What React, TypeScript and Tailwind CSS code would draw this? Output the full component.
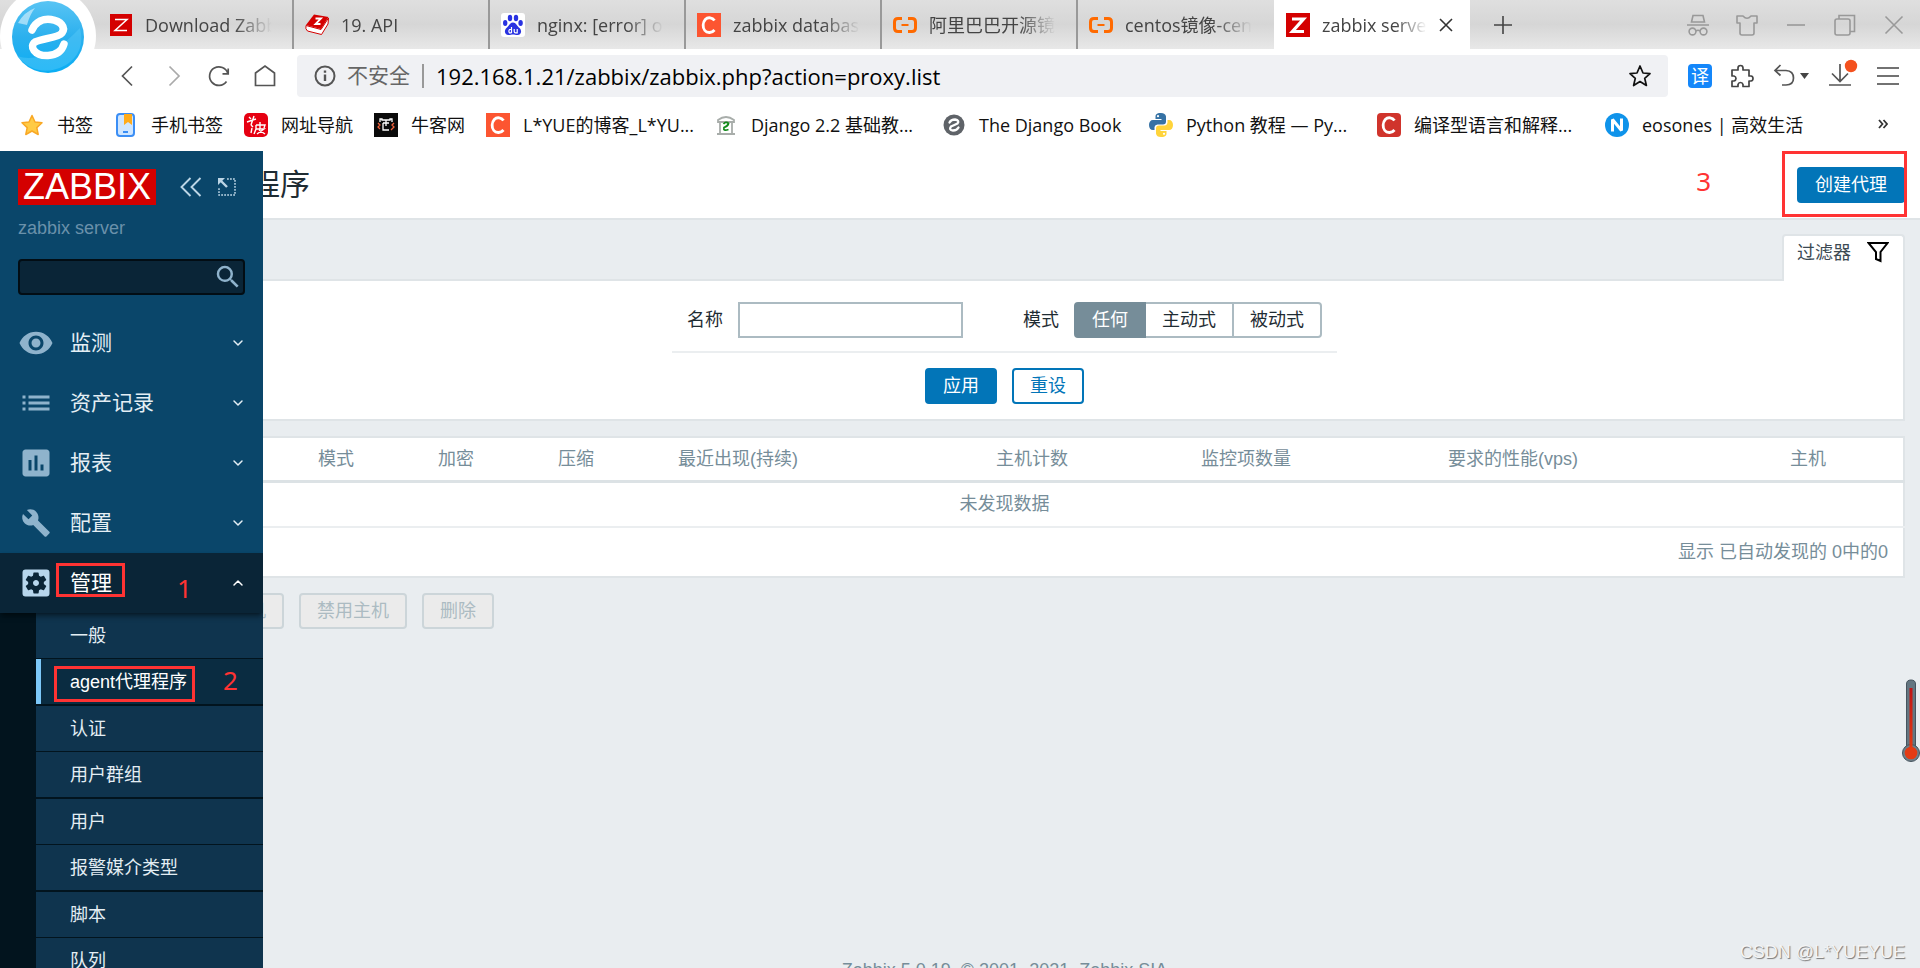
import React, { useState } from 'react';
import { ChevronDown, ChevronUp } from 'lucide-react';
import { MdBuild, MdInsertChart, MdList, MdSearch, MdSettingsApplications, MdVisibility } from 'react-icons/md';

/* ---------- small favicons ---------- */

const ZabbixThin = () => (
  <svg viewBox="0 0 24 24" className="size-6">
    <rect x="1" y="1" width="22" height="22" fill="#d40000" />
    <path d="M6 6.500H18L6 17.500H18" fill="none" stroke="#fff" strokeWidth="1.500" />
  </svg>
);

const ZabbixBold = () => (
  <svg viewBox="0 0 24 24" className="size-6">
    <rect width="24" height="24" fill="#d40000" />
    <path d="M6 6H17.500L6.500 18.500H18" fill="none" stroke="#fff" strokeWidth="3.200" />
  </svg>
);

const ApiBook = () => (
  <svg viewBox="0 0 24 24" className="size-6">
    <path d="M9 1.500L23.500 4L16 16L1 12Z" fill="#d40000" />
    <path d="M1 12.500L16 16.500L23.500 5L23 11L16.500 21.500L2.500 18Q0 16 1 12.500Z" fill="#fff" stroke="#d40000" strokeWidth="1" />
    <path d="M10.500 5.500H16L10.500 11H15.500" fill="none" stroke="#fff" strokeWidth="1.800" />
  </svg>
);

const Baidu = () => (
  <svg viewBox="0 0 24 24" className="size-6">
    <rect width="24" height="24" rx="3" fill="#fff" />
    <g fill="#2932e1">
      <ellipse cx="9" cy="5" rx="2.200" ry="3.200" />
      <ellipse cx="15" cy="5" rx="2.200" ry="3.200" />
      <ellipse cx="4.200" cy="10" rx="2.200" ry="2.900" />
      <ellipse cx="19.600" cy="10" rx="2.200" ry="2.900" />
      <path d="M12 9.500C15 9.500 16 13 18.500 15C21.500 18 20 22 16.500 22C14.500 22 13.500 21.500 12 21.500S9.500 22 7.500 22C4 22 2.500 18 5.500 15C8 13 9 9.500 12 9.500Z" />
    </g>
    <path d="M10.500 14V20M10.500 16.500H8.500Q7.300 18.200 8.500 19.800H10.500M13.200 16V18.500Q13.300 19.800 14.500 19.800H16.200V16" fill="none" stroke="#fff" strokeWidth="1.200" />
  </svg>
);

const LetterC = ({ color, round }: { color: string; round?: boolean }) => (
  <svg viewBox="0 0 24 24" className="size-6 shrink-0">
    <rect width="24" height="24" rx={round ? 4 : 0} fill={color} />
    <path d="M17.500 7.500C15.500 4.500 11 3.600 8.300 6.500C5.600 9.500 5.400 14.500 7.800 17.500C10.300 20.500 15 20 17.500 17" fill="none" stroke="#fff" strokeWidth="2.800" />
  </svg>
);

const Aliyun = () => (
  <svg viewBox="0 0 24 24" className="size-6" fill="none" stroke="#ff6a00">
    <path d="M9 5.500H5Q1.500 5.500 1.500 9V15Q1.500 18.500 5 18.500H9M15 5.500H19Q22.500 5.500 22.500 9V15Q22.500 18.500 19 18.500H15" strokeWidth="3" />
    <path d="M8.500 12H15.500" strokeWidth="2" />
  </svg>
);

const Star = () => (
  <svg viewBox="0 0 24 24" className="size-6">
    <path d="M12 2.500L15 9L22 9.800L16.800 14.600L18.200 21.500L12 18L5.800 21.500L7.200 14.600L2 9.800L9 9Z" fill="#ffcb45" stroke="#f9a825" strokeWidth="1.500" strokeLinejoin="round" />
  </svg>
);

const Phone = () => (
  <svg viewBox="0 0 24 24" className="size-6">
    <rect x="3" y="1" width="17" height="22" rx="3" fill="#cfe6ff" stroke="#3b8ef5" strokeWidth="2" />
    <path d="M10 1H18V12L14 9L10 12Z" fill="#ffab1a" />
    <path d="M9 19H14" stroke="#3b8ef5" strokeWidth="2" />
  </svg>
);

const NavSite = () => (
  <svg viewBox="0 0 24 24" className="size-6">
    <rect width="24" height="24" rx="5" fill="#e60012" />
    <path d="M5 4L7 6M10 3L7 12M3 9L12 6M8 15L7 20M12 12V16L10 21M12 12H21L20 15M16 9V16M12 16H20L13 21M15 17L21 21M7 12L9 14" fill="none" stroke="#fff" strokeWidth="1.400" />
  </svg>
);

const Nowcoder = () => (
  <svg viewBox="0 0 24 24" className="size-6">
    <rect width="24" height="24" fill="#0a0a0a" />
    <path d="M6 9V6H8V7H16V6H18V9M12 7V13M9 10H15M9 10V17H15" fill="none" stroke="#fff" strokeWidth="1.300" />
    <path d="M4 10L6 12L4 14L6 16M20 10L18 12L20 14L17 17" fill="none" stroke="#f0603a" strokeWidth="1.300" />
  </svg>
);

const DjangoTemple = () => (
  <svg viewBox="0 0 24 24" className="size-6">
    <path d="M4 7Q12 1 20 7V9H4ZM6 9V20M18 9V20M3 21H21" fill="none" stroke="#a8adaa" strokeWidth="1.800" />
    <path d="M9.500 11Q12 8 14.500 10.500Q14 13 10 14.500Q9 18.500 14.500 16.500" fill="none" stroke="#138a1b" strokeWidth="1.800" />
  </svg>
);

const GrayE = () => (
  <svg viewBox="0 0 24 24" className="size-6">
    <circle cx="12" cy="12" r="10.500" fill="#5f6368" />
    <path d="M7.500 9.500Q9 6.500 13 6.500Q18 7.500 15.500 10.500Q12.500 12 9 13.500Q6.500 17 11 17.500Q15 17.500 16.500 14.500" fill="none" stroke="#fff" strokeWidth="2.300" strokeLinecap="round" />
  </svg>
);

const Python = () => (
  <svg viewBox="0 0 24 24" className="size-6">
    <path d="M12 0C7 0 6.500 2 6.500 3.500V6H12.500V7H4C1.500 7 0 9 0 12S1.500 17 4 17H5.500V14Q6 11.500 8.500 11.500H14Q17 11.500 17 8.500V3.500Q16.500 0 12 0Z" fill="#3672a5" />
    <path d="M12 24C17 24 17.500 22 17.500 20.500V18H11.500V17H20C22.500 17 24 15 24 12S22.500 7 20 7H18.500V9.500Q18 12.500 15.500 12.500H10Q7 12.500 7 15.500V20.500Q7.500 24 12 24Z" fill="#ffd43b" />
    <circle cx="9" cy="3.200" r="1.100" fill="#fff" />
    <circle cx="15" cy="20.800" r="1.100" fill="#fff" />
  </svg>
);

const LetterN = () => (
  <svg viewBox="0 0 24 24" className="size-6">
    <circle cx="12" cy="12" r="12" fill="#0f93ea" />
    <path d="M7.500 18.500V6.500L16.500 17.500V5.500" fill="none" stroke="#fff" strokeWidth="3" strokeLinejoin="bevel" />
  </svg>
);

const BrowserLogo = () => (
  <svg viewBox="0 0 98 98" className="h-[98px] w-[98px]">
    <defs>
      <linearGradient id="logoBlue" x1="0" y1="0" x2="0" y2="1">
        <stop offset="0" stopColor="#58c4f4" />
        <stop offset="0.500" stopColor="#2bb0ee" />
        <stop offset="1" stopColor="#0aaef4" />
      </linearGradient>
    </defs>
    <circle cx="48" cy="36" r="48" fill="#fff" />
    <circle cx="48" cy="37" r="36" fill="url(#logoBlue)" />
    <path d="M18 23Q24 12 35 8Q30 14 27 25Z" fill="#fff" opacity="0.500" />
    <path d="M17 56Q44 66 80 28Q86 52 66 65Q38 80 17 56Z" fill="#5fcdfa" opacity="0.400" />
    <path d="M32 30C36 21 44 18.500 51 19.500C61 21 66 27 62 33C58 38 44 38 35 42C29 46 34 56 48 55.500C56 55 62 51 64 44" fill="none" stroke="#fff" strokeWidth="7.500" strokeLinecap="round" />
  </svg>
);

/* ---------- data ---------- */

const tabs = [
  { title: 'Download Zabbix', icon: <ZabbixThin /> },
  { title: '19. API', icon: <ApiBook /> },
  { title: 'nginx: [error] open()', icon: <Baidu /> },
  { title: 'zabbix database', icon: <LetterC color="#fc5531" /> },
  { title: '阿里巴巴开源镜像站', icon: <Aliyun /> },
  { title: 'centos镜像-centos', icon: <Aliyun /> }
];

const bookmarks = [
  { title: '书签', icon: <Star />, width: '' },
  { title: '手机书签', icon: <Phone />, width: '' },
  { title: '网址导航', icon: <NavSite />, width: '' },
  { title: '牛客网', icon: <Nowcoder />, width: '' },
  { title: 'L*YUE的博客_L*YU...', icon: <LetterC color="#fc5531" />, width: 'w-[207px]' },
  { title: 'Django 2.2 基础教...', icon: <DjangoTemple />, width: 'w-[207px]' },
  { title: 'The Django Book', icon: <GrayE />, width: 'w-[186px]' },
  { title: 'Python 教程 — Py...', icon: <Python />, width: 'w-[207px]' },
  { title: '编译型语言和解释...', icon: <LetterC color="#d0342c" round />, width: 'w-[207px]' },
  { title: 'eosones | 高效生活', icon: <LetterN />, width: '' }
];

const menu = [
  { label: '监测', icon: <MdVisibility className="size-9" /> },
  { label: '资产记录', icon: <MdList className="size-9" /> },
  { label: '报表', icon: <MdInsertChart className="size-9" /> },
  { label: '配置', icon: <MdBuild className="size-[30px]" /> }
];

const submenu = ['一般', 'agent代理程序', '认证', '用户群组', '用户', '报警媒介类型', '脚本', '队列'];

const modes = ['任何', '主动式', '被动式'];

/* ---------- browser chrome ---------- */

const IconButton = ({ label, children }: { label: string; children: React.ReactNode }) => (
  <button type="button" aria-label={label} className="flex size-6 items-center justify-center">
    {children}
  </button>
);

const TabBar = () => (
  <div className="flex h-[49px] bg-linear-to-b from-[#dfdfdf] via-[#d6d6d6] to-[#e8e8e8] pl-[98px] text-lg text-[#444]">
    {tabs.map((tab) => (
      <button key={tab.title} type="button" className="flex w-[196px] items-center gap-3 border-r-2 border-[#999] pr-5 pl-[11px] nth-6:border-transparent">
        <span className="shrink-0">{tab.icon}</span>
        <span className="flex-1 overflow-hidden text-left whitespace-nowrap mask-r-from-70% mask-r-to-100%">{tab.title}</span>
      </button>
    ))}
    <div className="flex w-[196px] items-center gap-3 bg-white pr-[17px] pl-3">
      <ZabbixBold />
      <span className="flex-1 overflow-hidden whitespace-nowrap mask-r-from-70% mask-r-to-100%">zabbix server</span>
      <button type="button" aria-label="关闭标签">
        <svg viewBox="0 0 14 14" className="size-[14px]" stroke="#333" strokeWidth="1.600">
          <path d="M1 1L13 13M13 1L1 13" />
        </svg>
      </button>
    </div>
    <button type="button" aria-label="新标签" className="ml-6">
      <svg viewBox="0 0 18 18" className="size-[18px]" stroke="#444" strokeWidth="1.600">
        <path d="M9 0V18M0 9H18" />
      </svg>
    </button>
    <div className="ml-auto flex items-center gap-[25px] pr-[14px]">
      <IconButton label="无痕">
        <svg viewBox="0 0 24 24" className="size-6" fill="none" stroke="#999" strokeWidth="1.600">
          <path d="M5.500 9L7 2.500H17L18.500 9ZM1 12H23M10 18Q12 16.500 14 18" />
          <circle cx="6.500" cy="18.500" r="3.400" />
          <circle cx="17.500" cy="18.500" r="3.400" />
        </svg>
      </IconButton>
      <IconButton label="皮肤">
        <svg viewBox="0 0 24 24" className="size-6" fill="none" stroke="#999" strokeWidth="1.600" strokeLinejoin="round">
          <path d="M2 3H8Q12 7.500 16 3H22V10H19V20Q19 22 17 22H7Q5 22 5 20V10H2Z" />
        </svg>
      </IconButton>
      <IconButton label="最小化">
        <svg viewBox="0 0 24 24" className="size-6" stroke="#999" strokeWidth="1.600">
          <path d="M3 12H21" />
        </svg>
      </IconButton>
      <IconButton label="还原">
        <svg viewBox="0 0 24 24" className="size-6" fill="none" stroke="#999" strokeWidth="1.600">
          <rect x="2" y="6" width="15" height="16" rx="2" />
          <path d="M6 6V2.500H21.500V18.500H17" />
        </svg>
      </IconButton>
      <IconButton label="关闭">
        <svg viewBox="0 0 24 24" className="size-6" stroke="#999" strokeWidth="1.600">
          <path d="M3.500 3.500L20.500 20.500M20.500 3.500L3.500 20.500" />
        </svg>
      </IconButton>
    </div>
  </div>
);

const AddressBar = () => (
  <div className="flex h-[54px] items-center bg-white pr-5 pl-[115px]">
    <div className="flex items-center gap-[22px] pr-5">
      <IconButton label="后退">
        <svg viewBox="0 0 24 24" className="size-6" fill="none" stroke="#555" strokeWidth="1.700">
          <path d="M17 2.500L7.500 12L17 21.500" />
        </svg>
      </IconButton>
      <IconButton label="前进">
        <svg viewBox="0 0 24 24" className="size-6" fill="none" stroke="#aaa" strokeWidth="1.700">
          <path d="M8.500 2.500L18 12L8.500 21.500" />
        </svg>
      </IconButton>
      <IconButton label="刷新">
        <svg viewBox="0 0 24 24" className="size-6" fill="none" stroke="#555" strokeWidth="1.700">
          <path d="M19.500 17.500A9.300 9.300 0 1 1 20.800 9.500M15.500 9.800H21.200V4.500" />
        </svg>
      </IconButton>
      <IconButton label="主页">
        <svg viewBox="0 0 24 24" className="size-6" fill="none" stroke="#555" strokeWidth="1.700">
          <path d="M2.500 21.500V9L12 2L21.500 9V21.500Z" />
        </svg>
      </IconButton>
    </div>
    <div className="flex h-[42px] flex-1 items-center rounded-sm bg-[#f0f1f4] px-4">
      <svg viewBox="0 0 24 24" className="size-6" fill="none" stroke="#555" strokeWidth="2">
        <circle cx="12" cy="12" r="9.500" />
        <path d="M12 10.500V17M12 6.500V8.800" strokeWidth="2.400" />
      </svg>
      <span className="ml-[10px] text-[21px] text-[#666]">不安全</span>
      <span className="mx-3 h-6 w-[2px] bg-[#999]" />
      <input aria-label="地址" defaultValue="192.168.1.21/zabbix/zabbix.php?action=proxy.list" className="h-full min-w-0 flex-1 text-[22px] text-black outline-none" />
      <IconButton label="收藏">
        <svg viewBox="0 0 24 24" className="size-6" fill="none" stroke="#111" strokeWidth="1.700" strokeLinejoin="round">
          <path d="M12 2L15 9L22 9.600L16.700 14.300L18.400 21.500L12 17.600L5.600 21.500L7.300 14.300L2 9.600L9 9Z" />
        </svg>
      </IconButton>
    </div>
    <div className="flex items-center gap-[18px] pl-5">
      <button type="button" className="flex size-6 items-center justify-center rounded-sm bg-[#1487fa] text-lg leading-6 text-white">译</button>
      <IconButton label="扩展">
        <svg viewBox="0 0 24 24" className="size-6" fill="none" stroke="#444" strokeWidth="1.700" strokeLinejoin="round">
          <path d="M2 6H8V4Q8 1.500 10.500 1.500T13 4V6H19V12H21Q23 12.300 23 14.500T21 17H19V22.500H13V20.500Q12.500 18.500 10.500 18.500T8 20.500V22.500H2V17H4Q6 16.500 6 14.500T4 12H2Z" />
        </svg>
      </IconButton>
      <button type="button" aria-label="撤销" className="flex items-center">
        <svg viewBox="0 0 38 24" className="h-6 w-[38px]" fill="none" stroke="#555" strokeWidth="1.700">
          <path d="M8.500 1L3 6.500L8.500 11.500M3 6.500H14Q21.500 7 21.500 14T14 21H10" />
          <path d="M28 9H37L32.500 15Z" fill="#444" stroke="none" />
        </svg>
      </button>
      <button type="button" aria-label="下载">
        <svg viewBox="0 0 30 30" className="-mt-1 h-[30px] w-[30px]" fill="none" stroke="#555" strokeWidth="1.700">
          <path d="M12 5V22M4 14.500L12 22.500L20 14.500M1 26H23" />
          <circle cx="23" cy="7" r="6.200" fill="#f4511e" stroke="none" />
        </svg>
      </button>
      <IconButton label="菜单">
        <svg viewBox="0 0 24 24" className="size-6" stroke="#444" strokeWidth="1.700">
          <path d="M1 4H23M1 12H23M1 20H23" />
        </svg>
      </IconButton>
    </div>
  </div>
);

const BookmarkBar = () => (
  <nav className="flex h-12 items-center gap-[21px] bg-white pr-8 pb-1 pl-5 text-lg text-[#111]">
    {bookmarks.map((item) => (
      <a key={item.title} href="#" className={`flex shrink-0 items-center gap-[13px] whitespace-nowrap ${item.width}`}>
        <span className="shrink-0">{item.icon}</span>
        {item.title}
      </a>
    ))}
    <button type="button" aria-label="更多书签" className="ml-auto">
      <svg viewBox="0 0 10 12" className="h-3 w-[10px]" fill="none" stroke="#333" strokeWidth="1.800">
        <path d="M1 1L4.500 5L1 9M5.500 1L9 5L5.500 9" />
      </svg>
    </button>
  </nav>
);

/* ---------- zabbix ---------- */

const Sidebar = () => (
  <aside className="absolute inset-y-0 left-0 z-10 flex w-[263px] flex-col overflow-hidden bg-[#0a466a]">
    <div className="flex shrink-0 items-center px-[18px] pt-[18px]">
      <a href="#" className="flex h-9 items-center bg-[#d40000] px-[5px] text-4xl leading-9 text-white">ZABBIX</a>
      <button type="button" aria-label="收起侧边栏" className="ml-6">
        <svg viewBox="0 0 22 20" className="h-5 w-[22px]" fill="none" stroke="#bcd5e5" strokeWidth="1.900">
          <path d="M10.500 1L1.500 10L10.500 19M20.500 1L11.500 10L20.500 19" />
        </svg>
      </button>
      <button type="button" aria-label="隐藏侧边栏" className="ml-4">
        <svg viewBox="0 0 18 18" className="size-[18px]" fill="none" stroke="#bcd5e5" strokeWidth="1.500">
          <path d="M9 1H17V17H1V9" strokeDasharray="1.800 1.200" />
          <path d="M2 2L9 9" strokeWidth="2.400" />
          <path d="M0 0H7L0 7Z" fill="#bcd5e5" stroke="none" />
        </svg>
      </button>
    </div>
    <div className="shrink-0 px-[18px] pt-[9px] text-lg text-[#6a91aa]">zabbix server</div>
    <form className="mx-[18px] mt-[17px] mb-[18px] flex h-9 shrink-0 items-center rounded-sm border-2 border-[#020d14] bg-[#0a2537]" onSubmit={(e) => e.preventDefault()}>
      <input aria-label="搜索" className="min-w-0 flex-1 px-2 text-lg text-white outline-none" />
      <button type="submit" aria-label="搜索" className="text-[#8fb3cc]">
        <MdSearch className="size-[30px]" />
      </button>
    </form>
    <nav className="shrink-0 text-[21px] text-[#e4eef4]">
      {menu.map((item) => (
        <a key={item.label} href="#" className="flex h-[60px] items-center gap-4 pr-[17px] pl-[18px]">
          <span className="flex w-9 justify-center text-[#8fb3cc]">{item.icon}</span>
          <span className="flex-1">{item.label}</span>
          <ChevronDown className="size-4" strokeWidth={2.2} />
        </a>
      ))}
      <a href="#" className="relative flex h-[60px] items-center gap-4 bg-[#0a2537] pr-[17px] pl-[18px] text-white shadow-md shadow-black/40">
        <span className="flex w-9 justify-center text-[#b7d6ec]">
          <MdSettingsApplications className="size-9" />
        </span>
        <span className="flex-1">管理</span>
        <ChevronUp className="size-4" strokeWidth={2.2} />
      </a>
      <ul className="bg-[#02141e] pl-9 text-lg">
        {submenu.map((label) => (
          <li key={label} className="border-b border-[#02141e] even:border-b-2">
            <a
              href="#"
              className={`flex h-[45px] items-center ${
                label === 'agent代理程序' ? 'border-l-[5px] border-[#7cc8f9] bg-[#0a2c41] pl-[29px] text-white' : 'bg-[#0f344e] pl-[34px]'
              }`}
            >
              {label}
            </a>
          </li>
        ))}
      </ul>
    </nav>
  </aside>
);

const Filter = () => {
  const [mode, setMode] = useState('任何');

  return (
    <section>
      <div className="flex justify-end">
        <button type="button" className="relative -mb-[2px] flex h-[47px] items-start gap-4 rounded-t-sm border-2 border-b-0 border-[#dfe4e7] bg-white pt-[3px] pr-[14px] pl-[13px] text-lg text-[#3c4a53]">
          过滤器
          <svg viewBox="0 0 22 22" className="mt-[2px] size-[22px]" fill="none" stroke="#000" strokeWidth="2">
            <path d="M1.500 2H20.500L13.500 11V20L9 18V11Z" />
          </svg>
        </button>
      </div>
      <form className="flex flex-col items-center border-2 border-[#dfe4e7] bg-white pt-[21px] pb-[15px]" onSubmit={(e) => e.preventDefault()}>
        <div className="flex items-center border-b-2 border-[#ebeef0] px-[15px] pb-[13px]">
          <label htmlFor="filter-name" className="mr-[15px]">名称</label>
          <input id="filter-name" className="mr-[60px] h-9 w-[225px] border-2 border-[#acbbc2] px-1 outline-none" />
          <span className="mr-[15px]">模式</span>
          <div className="flex h-9">
            {modes.map((item) => (
              <label
                key={item}
                className="flex items-center border-2 border-l-0 border-[#acbbc2] px-4 first:rounded-l-sm first:border-l-2 last:rounded-r-sm has-checked:border-[#768d99] has-checked:bg-[#768d99] has-checked:text-white"
              >
                <input type="radio" name="mode" className="sr-only" checked={mode === item} onChange={() => setMode(item)} />
                {item}
              </label>
            ))}
          </div>
        </div>
        <div className="flex gap-[15px] pt-[15px]">
          <button type="submit" className="h-9 rounded-sm border-2 border-[#0275b8] bg-[#0275b8] px-4 text-white">应用</button>
          <button type="reset" className="h-9 rounded-sm border-2 border-[#0275b8] bg-white px-4 text-[#0275b8]">重设</button>
        </div>
      </form>
    </section>
  );
};

const ProxyTable = () => (
  <table className="mt-[15px] w-full border-collapse border-2 border-[#dfe4e7] bg-white text-[#768d99]">
    <thead>
      <tr className="h-11 border-b-[3px] border-[#dce2e5] text-left">
        <th className="w-[206px] pl-12 font-normal">名称</th>
        <th className="w-[120px] pl-[7px] font-normal">模式</th>
        <th className="w-[120px] pl-[7px] font-normal">加密</th>
        <th className="w-[120px] pl-[7px] font-normal">压缩</th>
        <th className="w-[240px] pl-[7px] font-normal">最近出现(持续)</th>
        <th className="w-[164px] pr-[7px] text-right font-normal">主机计数</th>
        <th className="w-[223px] pr-[7px] text-right font-normal">监控项数量</th>
        <th className="w-[287px] pr-[7px] text-right font-normal">要求的性能(vps)</th>
        <th className="pl-[205px] font-normal">主机</th>
      </tr>
    </thead>
    <tbody>
      <tr className="h-[46px] border-b-2 border-[#ebeef0]">
        <td colSpan={9} className="text-center">未发现数据</td>
      </tr>
      <tr className="h-[50px]">
        <td colSpan={9} className="pr-[15px] text-right">显示 已自动发现的 0中的0</td>
      </tr>
    </tbody>
  </table>
);

const Main = () => (
  <main className="flex h-full flex-col overflow-hidden bg-[#e9edf0] pl-[104px] text-lg text-[#1f2c33]">
    <header className="-ml-[104px] flex h-[69px] shrink-0 items-center justify-between border-b-2 border-[#dfe4e7] bg-white pr-[15px] pl-[115px]">
      <h1 className="text-3xl">agent代理程序</h1>
      <button type="button" className="h-9 rounded-sm bg-[#0275b8] px-[18px] text-white">创建代理</button>
    </header>
    <div className="min-h-[calc(100vh-232px)] shrink-0 pt-[14px] pr-[15px]">
      <Filter />
      <ProxyTable />
      <div className="flex items-center gap-[15px] pt-[15px] text-[#acbbc2]">
        <span className="w-[57px] whitespace-nowrap">0 选择</span>
        {['启用主机', '禁用主机', '删除'].map((label) => (
          <button key={label} type="button" disabled className="h-9 rounded-sm border-2 border-[#ccd5d9] bg-[#ebebeb] px-4">
            {label}
          </button>
        ))}
      </div>
    </div>
    <footer className="shrink-0 pr-[15px] text-center text-[#768d99]">Zabbix 5.0.19. © 2001–2021, Zabbix SIA</footer>
  </main>
);

/* ---------- overlays ---------- */

const Annotations = () => (
  <div className="pointer-events-none absolute inset-0 z-20 font-['Noto_Sans','Noto_Sans_CJK_SC',sans-serif] text-[26px] leading-8 text-[#ff3333]">
    <div className="absolute top-[412px] left-14 h-[34px] w-[69px] border-[3px] border-[#ff3333]" />
    <span className="absolute top-[421px] left-[177px]">1</span>
    <div className="absolute top-[515px] left-[54px] h-9 w-[141px] border-[3px] border-[#ff3333]" />
    <span className="absolute top-[513px] left-[223px]">2</span>
    <div className="absolute top-0 right-[13px] h-[66px] w-[125px] border-[3px] border-[#ff3333]" />
    <span className="absolute top-[14px] right-[209px]">3</span>
    <svg viewBox="0 0 18 84" className="absolute top-[528px] right-0 h-[84px] w-[18px]">
      <defs>
        <linearGradient id="mercury" x1="0" y1="0" x2="0" y2="1">
          <stop offset="0" stopColor="#c01515" />
          <stop offset="1" stopColor="#e63a12" />
        </linearGradient>
      </defs>
      <path d="M4.500 5Q4.500 1 9 1T13.500 5V68H4.500Z" fill="#647681" stroke="#46545e" />
      <circle cx="9" cy="74" r="8.500" fill="#6e7e88" stroke="#46545e" />
      <rect x="7.500" y="9" width="3" height="62" fill="url(#mercury)" />
      <circle cx="9" cy="74" r="6.300" fill="#e43b14" />
    </svg>
    <span className="absolute right-[15px] bottom-1 font-['Liberation_Sans',sans-serif] text-lg leading-6 text-[#f4f4f4] [text-shadow:1px_1px_1px_#777]">CSDN @L*YUEYUE</span>
  </div>
);

export default function App() {
  return (
    <div className="flex h-screen flex-col overflow-hidden">
      <div className="relative shrink-0 font-['Open_Sans','Noto_Sans_CJK_SC',sans-serif]">
        <TabBar />
        <AddressBar />
        <BookmarkBar />
        <div className="pointer-events-none absolute top-0 left-0">
          <BrowserLogo />
        </div>
      </div>
      <div className="relative min-h-0 flex-1 font-['Liberation_Sans','Noto_Sans_CJK_SC',sans-serif]">
        <Main />
        <Sidebar />
        <Annotations />
      </div>
    </div>
  );
}
